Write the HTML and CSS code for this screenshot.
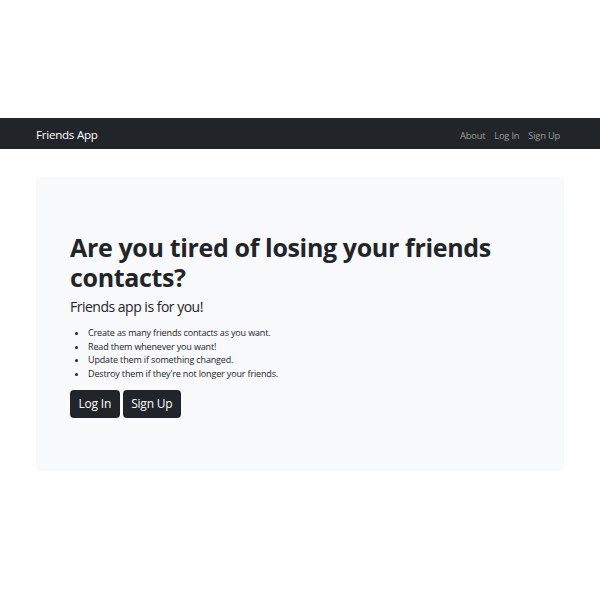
FILE: index.html
```html
<!DOCTYPE html>
<html lang="en">
<head>
<meta charset="utf-8">
<title>Friends App</title>
<link rel="stylesheet" href="styles.css">
</head>
<body>
<div class="page">
  <nav class="navbar">
    <a class="brand" href="#">Friends App</a>
    <ul class="nav-links">
      <li><a href="#">About</a></li>
      <li><a href="#">Log In</a></li>
      <li><a href="#">Sign Up</a></li>
    </ul>
  </nav>
  <main class="content">
    <section class="jumbo">
      <h1 class="title">Are you tired of losing your friends contacts?</h1>
      <p class="lead">Friends app is for you!</p>
      <ul class="features">
        <li>Create as many friends contacts as you want.</li>
        <li>Read them whenever you want!</li>
        <li>Update them if something changed.</li>
        <li>Destroy them if they're not longer your friends.</li>
      </ul>
      <div class="actions">
        <a class="btn" href="#">Log In</a>
        <a class="btn" href="#">Sign Up</a>
      </div>
    </section>
  </main>
</div>
</body>
</html>
```
FILE: styles.css
```css
* { box-sizing: border-box; }
html, body { margin: 0; padding: 0; background: #fff; }
body {
  font-family: "Segoe UI", "Open Sans", "Noto Sans", sans-serif;
  color: #212529;
}
.page { padding-top: 118px; }
.navbar {
  background: #212529;
  height: 31px;
  display: flex;
  align-items: center;
  justify-content: space-between;
  padding: 0 40px 0 36px;
}
.brand {
  color: #fff;
  text-decoration: none;
  font-size: 11.6px;
  letter-spacing: -0.25px;
  margin-top: 1px;
}
.nav-links {
  list-style: none;
  margin: 0;
  padding: 0;
  display: flex;
  gap: 9px;
  margin-top: -1px;
}
.nav-links a {
  color: rgba(255,255,255,0.55);
  text-decoration: none;
  font-size: 9.3px;
  letter-spacing: -0.2px;
}
.content { padding: 28px 36px 0 36px; }
.jumbo {
  background: #f8f9fa;
  border-radius: 5px;
  height: 294px;
  padding: 55px 34px 0 34px;
}
.title {
  margin: 0 0 3px 0;
  font-size: 25px;
  line-height: 30px;
  font-weight: 700;
  letter-spacing: -0.35px;
  max-width: 440px;
}
.lead {
  margin: 0 0 8px 0;
  font-size: 14px;
  line-height: 23px;
  font-weight: 400;
  letter-spacing: -0.5px;
}
.features {
  margin: 0 0 9px 0;
  padding-left: 18px;
  font-size: 9px;
  line-height: 13.7px;
  letter-spacing: -0.15px;
}
.features li { height: 13.7px; }
.actions { display: flex; gap: 3px; }
.btn {
  display: inline-block;
  background: #212529;
  color: #fff;
  text-decoration: none;
  font-size: 12px;
  height: 28px;
  line-height: 28px;
  padding: 0 8.5px;
  border-radius: 4px;
  letter-spacing: -0.2px;
}
```
